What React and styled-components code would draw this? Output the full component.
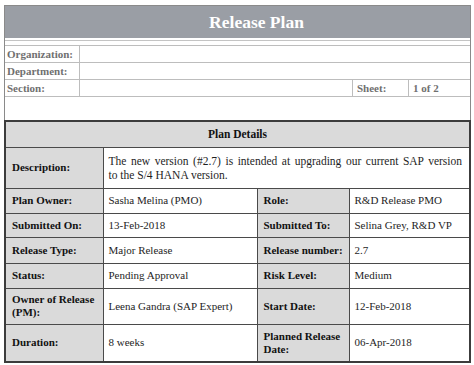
import React from "react";
import styled, { createGlobalStyle } from "styled-components";

const GlobalStyle = createGlobalStyle`
    * {
        box-sizing: border-box;
    }
    body {
        margin: 0;
        background: #ffffff;
        font-family: "Liberation Serif", "DejaVu Serif", serif;
    }
`;

const Sheet = styled.div`
    width: 467px;
    margin: 5px 0 0 4px;
    border: 1px solid #8a8a8a;
    border-bottom: none;
    background: #ffffff;
`;

const TitleBar = styled.div`
    height: 32px;
    background: #9a9ea5;
    color: #ffffff;
    font-size: 17.5px;
    font-weight: bold;
    display: flex;
    align-items: center;
    justify-content: center;
    padding-left: 38px;
`;

const InfoBlock = styled.div`
    margin-top: 2px;
    border-top: 1px solid #c4c4c4;
    padding-top: 4px;
`;

const InfoGrid = styled.div`
    display: grid;
    grid-template-columns: 75px 273px 56px 1fr;
    grid-auto-rows: 17px;
    border-top: 1px solid #bdbdbd;
`;

const InfoLabel = styled.div`
    display: flex;
    align-items: center;
    padding-left: 2px;
    font-size: 11px;
    font-weight: bold;
    color: #707070;
    border-bottom: 1px solid #bdbdbd;
    border-right: 1px solid #bdbdbd;
`;

const InfoValue = styled.div`
    display: flex;
    align-items: center;
    padding-left: 4px;
    font-size: 11px;
    font-weight: bold;
    color: #707070;
    border-bottom: 1px solid #bdbdbd;
    border-right: ${props => (props.$last ? "none" : "1px solid #bdbdbd")};
    grid-column: ${props => (props.$span ? `span ${props.$span}` : "auto")};
`;

const Spacer = styled.div`
    height: 23px;
`;

const Table = styled.table`
    width: calc(100% + 2px);
    margin-left: -1px;
    border-collapse: collapse;
    table-layout: fixed;
    border: 2px solid #3c3c3c;
    font-size: 11px;
`;

const HeaderCell = styled.th`
    height: 26px;
    background: #dadada;
    border: 1px solid #4a4a4a;
    font-weight: bold;
    font-size: 11.5px;
    color: #111111;
    text-align: center;
`;

const Cell = styled.td`
    border: 1px solid #4a4a4a;
    padding: 0 5px 0 ${props => (props.$label ? "6px" : "5px")};
    background: ${props => (props.$label ? "#dadada" : "#ffffff")};
    font-weight: ${props => (props.$label ? "bold" : "normal")};
    color: ${props => (props.$label ? "#111111" : "#1e1e1e")};
    line-height: 13px;
    vertical-align: middle;
`;

// first line of the description is justified to the cell edge
const DescLine = styled.div`
    font-size: 11.5px;
    line-height: 14px;
    text-align: ${props => (props.$justify ? "justify" : "left")};
    text-align-last: ${props => (props.$justify ? "justify" : "auto")};
    padding-right: ${props => (props.$justify ? "2px" : "0")};
`;

const Row = styled.tr`
    height: ${props => props.$h}px;
`;

const rows = [
    { h: 25, a: "Plan Owner:", b: "Sasha Melina (PMO)", c: "Role:", d: "R&D Release PMO" },
    { h: 24, a: "Submitted On:", b: "13-Feb-2018", c: "Submitted To:", d: "Selina Grey, R&D VP" },
    { h: 26, a: "Release Type:", b: "Major Release", c: "Release number:", d: "2.7" },
    { h: 25, a: "Status:", b: "Pending Approval", c: "Risk Level:", d: "Medium" },
    { h: 36, a: "Owner of Release (PM):", b: "Leena Gandra (SAP Expert)", c: "Start Date:", d: "12-Feb-2018" },
    { h: 38, a: "Duration:", b: "8 weeks", c: "Planned Release Date:", d: "06-Apr-2018" },
];

const App = () => (
    <>
        <GlobalStyle />
        <Sheet>
            <TitleBar>Release Plan</TitleBar>

            {/* top info fields */}
            <InfoBlock>
                <InfoGrid>
                    <InfoLabel>Organization:</InfoLabel>
                    <InfoValue $span={3} $last />
                    <InfoLabel>Department:</InfoLabel>
                    <InfoValue $span={3} $last />
                    <InfoLabel>Section:</InfoLabel>
                    <InfoValue />
                    <InfoValue>Sheet:</InfoValue>
                    <InfoValue $last>1 of 2</InfoValue>
                </InfoGrid>
            </InfoBlock>

            <Spacer />

            {/* plan details */}
            <Table>
                <colgroup>
                    <col style={{ width: 98 }} />
                    <col style={{ width: 154 }} />
                    <col style={{ width: 92 }} />
                    <col />
                </colgroup>
                <thead>
                    <tr>
                        <HeaderCell colSpan={4}>Plan Details</HeaderCell>
                    </tr>
                </thead>
                <tbody>
                    <Row $h={41}>
                        <Cell $label>Description:</Cell>
                        <Cell colSpan={3}>
                            <DescLine $justify>
                                The new version (#2.7) is intended at upgrading our current SAP version
                            </DescLine>
                            <DescLine>to the S/4 HANA version.</DescLine>
                        </Cell>
                    </Row>
                    {rows.map(r => (
                        <Row key={r.a} $h={r.h}>
                            <Cell $label>{r.a}</Cell>
                            <Cell>{r.b}</Cell>
                            <Cell $label>{r.c}</Cell>
                            <Cell>{r.d}</Cell>
                        </Row>
                    ))}
                </tbody>
            </Table>
        </Sheet>
    </>
);

export default App;
